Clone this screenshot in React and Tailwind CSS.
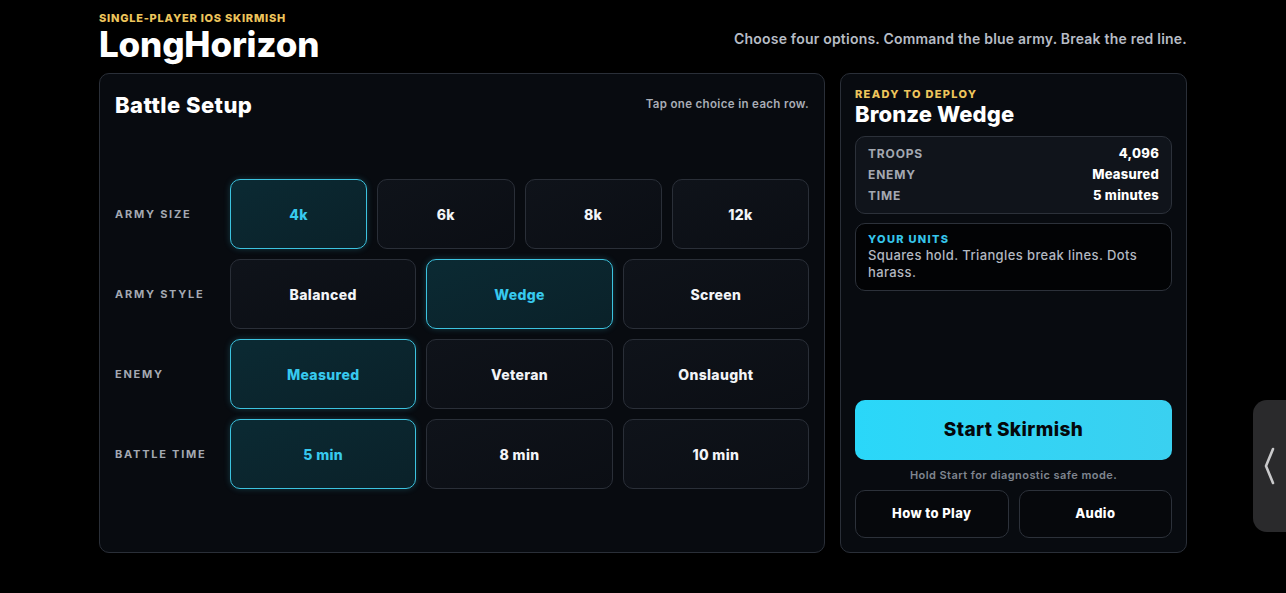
import React from "react";

const font = { fontFamily: "Inter, 'Noto Sans', 'Liberation Sans', sans-serif" };

function Choice({ label, selected }) {
  return (
    <div
      className={
        "h-[70px] rounded-[10px] flex items-center justify-center text-[14px] font-extrabold tracking-[0.025em] border-[1.5px] " +
        (selected
          ? "border-[#3cc3df] bg-gradient-to-br from-[#0b2a33] to-[#0a2129] text-[#37c9ee] shadow-[0_0_6px_rgba(60,195,223,0.25)]"
          : "border-[#2a2f38] bg-gradient-to-br from-[#0f131a] to-[#0b0e14] text-[#f2f4f7]")
      }
    >
      {label}
    </div>
  );
}

function Row({ label, options, selected }) {
  return (
    <div className="grid grid-cols-[115px_1fr] items-center">
      <div className="text-[11px] font-bold tracking-[0.16em] text-[#a4a9b2] uppercase">{label}</div>
      <div className={"grid gap-[10px] " + (options.length === 4 ? "grid-cols-4" : "grid-cols-3")}>
        {options.map((o) => (
          <Choice key={o} label={o} selected={o === selected} />
        ))}
      </div>
    </div>
  );
}

export default function App() {
  return (
    <div className="relative min-h-[593px] w-full bg-black text-white overflow-hidden" style={font}>
      <div className="mx-auto w-[1088px] pt-[11px]">
        <div className="flex items-end justify-between">
          <div className="pl-[0px]">
            <div className="text-[11px] leading-[14px] font-extrabold tracking-[0.07em] text-[#eec55c]">
              SINGLE-PLAYER IOS SKIRMISH
            </div>
            <div className="text-[35px] leading-[38px] font-extrabold tracking-[-0.005em] text-white">LongHorizon</div>
          </div>
          <div className="mb-[14px] text-[14px] font-semibold text-[#b7bcc5] tracking-[0.015em]">
            Choose four options. Command the blue army. Break the red line.
          </div>
        </div>

        <div className="mt-[10px] flex gap-[15px] h-[480px]">
          <div className="w-[726px] rounded-[10px] border border-[#2a2f38] bg-[#080b10] p-[15px] flex flex-col">
            <div className="flex items-center justify-between">
              <div className="text-[22px] leading-[32px] font-extrabold tracking-[0.02em] text-white">Battle Setup</div>
              <div className="text-[11.5px] font-semibold tracking-[0.03em] text-[#a8adb6]">Tap one choice in each row.</div>
            </div>
            <div className="flex-1 flex flex-col justify-center gap-[10px] pt-[10px]">
              <Row label="Army Size" options={["4k", "6k", "8k", "12k"]} selected="4k" />
              <Row label="Army Style" options={["Balanced", "Wedge", "Screen"]} selected="Wedge" />
              <Row label="Enemy" options={["Measured", "Veteran", "Onslaught"]} selected="Measured" />
              <Row label="Battle Time" options={["5 min", "8 min", "10 min"]} selected="5 min" />
            </div>
          </div>

          <div className="w-[347px] rounded-[10px] border border-[#2a2f38] bg-[#080b10] px-[14px] pt-[13px] pb-[14px] flex flex-col">
            <div className="text-[11px] leading-[14px] font-extrabold tracking-[0.12em] text-[#eec55c]">READY TO DEPLOY</div>
            <div className="text-[22px] leading-[27px] font-extrabold tracking-[0.005em] text-white">Bronze Wedge</div>
            <div className="mt-[8px] rounded-[10px] border border-[#2c313a] bg-[#10141b] px-[12px] py-[8px] flex flex-col gap-[3px]">
              {[
                ["TROOPS", "4,096"],
                ["ENEMY", "Measured"],
                ["TIME", "5 minutes"],
              ].map(([k, v]) => (
                <div key={k} className="flex justify-between items-center h-[18px]">
                  <span className="text-[12px] font-bold tracking-[0.07em] text-[#a3a8b1]">{k}</span>
                  <span className="text-[13px] font-extrabold tracking-[0.02em] text-white">{v}</span>
                </div>
              ))}
            </div>
            <div className="mt-[9px] rounded-[10px] border border-[#2c313a] bg-[#020305] px-[12px] pt-[8px] pb-[9px]">
              <div className="text-[11px] leading-[14px] font-extrabold tracking-[0.12em] text-[#36c6ec]">YOUR UNITS</div>
              <div className="text-[13px] leading-[17px] font-medium tracking-[0.03em] text-[#b3b8c1] mt-[1px]">
                Squares hold. Triangles break lines. Dots harass.
              </div>
            </div>
            <div className="flex-1" />
            <div className="h-[60px] rounded-[10px] bg-gradient-to-r from-[#2ad7f9] to-[#3ad0f0] flex items-center justify-center text-[19px] font-extrabold tracking-[0.02em] text-[#04080c]">
              Start Skirmish
            </div>
            <div className="mt-[8px] text-center text-[11px] leading-[14px] font-semibold text-[#7f858f] tracking-[0.04em]">
              Hold Start for diagnostic safe mode.
            </div>
            <div className="mt-[8px] grid grid-cols-2 gap-[10px]">
              <div className="h-[48px] rounded-[10px] border border-[#2c313a] bg-[#06080c] flex items-center justify-center text-[13px] font-extrabold tracking-[0.03em] text-white">
                How to Play
              </div>
              <div className="h-[48px] rounded-[10px] border border-[#2c313a] bg-[#06080c] flex items-center justify-center text-[13px] font-extrabold tracking-[0.03em] text-white">
                Audio
              </div>
            </div>
          </div>
        </div>
      </div>

      <div className="absolute right-0 top-[400px] w-[33px] h-[132px] rounded-l-[14px] bg-[#2a2a2c] flex items-center pl-[10px]">
        <svg width="12" height="38" viewBox="0 0 12 38" fill="none">
          <path d="M10 2 L3 19 L10 36" stroke="#c9c9cb" strokeWidth="2.6" strokeLinecap="round" strokeLinejoin="round" />
        </svg>
      </div>
    </div>
  );
}
